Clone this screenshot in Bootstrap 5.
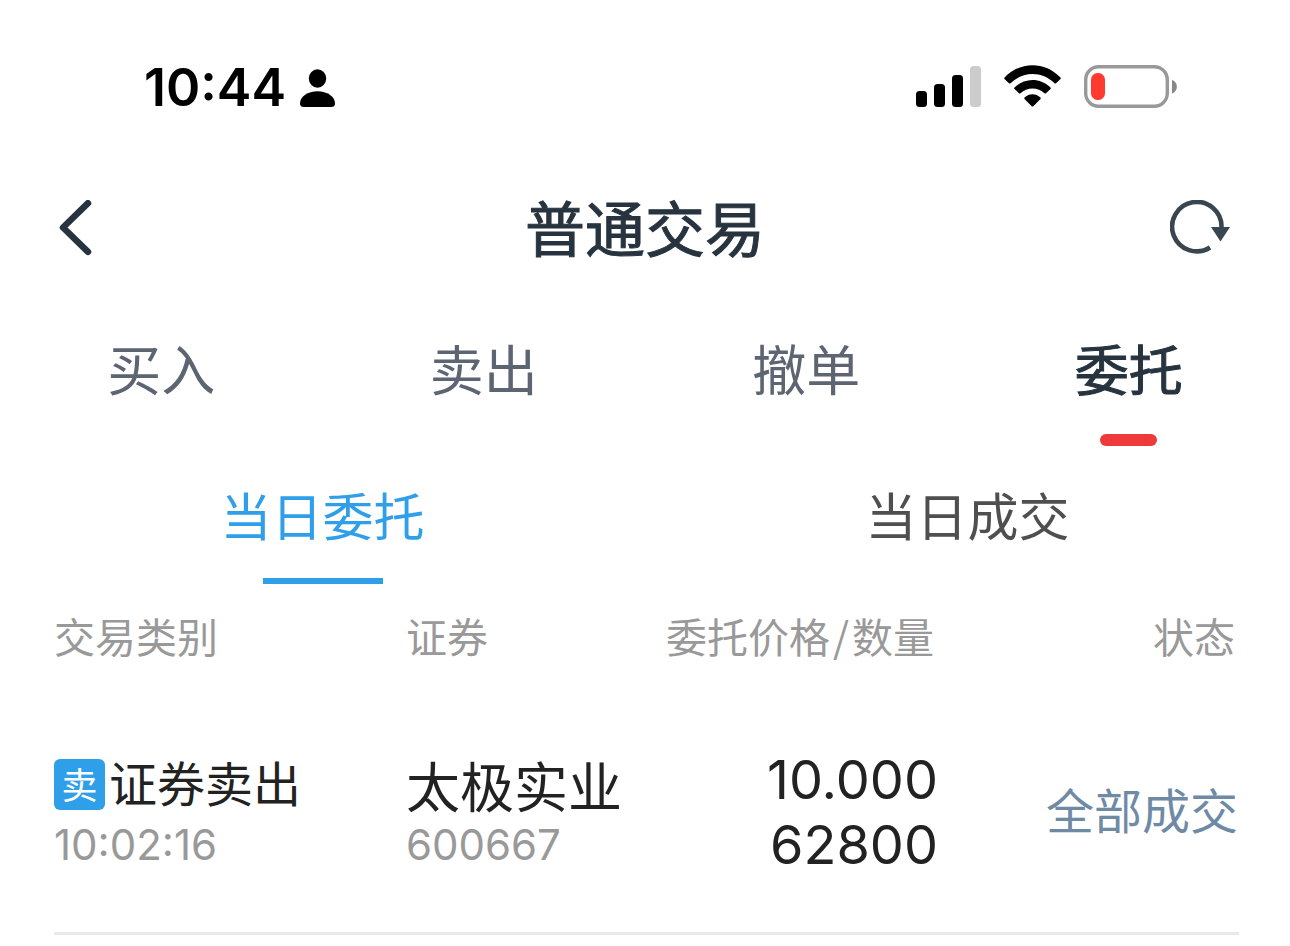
<!DOCTYPE html>
<html lang="zh-CN">
<head>
<meta charset="utf-8">
<meta name="viewport" content="width=device-width, initial-scale=1">
<title>普通交易</title>
<link rel="stylesheet" href="https://cdn.jsdelivr.net/npm/bootstrap@5.3.0/dist/css/bootstrap.min.css">
<style>
:root { --ink: #27343f; --blue: #2f9fea; --red: #ee3a3b; }
body { font-family: Inter, "Noto Sans CJK SC", sans-serif; background: #fff; color: #222; }
.zh { font-family: "Noto Sans CJK SC", sans-serif; }
svg { display: block; }
.medium { font-weight: 400; -webkit-text-stroke: 1px currentColor; }

.status-bar { height: 176px; padding: 0 112px 0 144px; color: #000; }
.clock-group { gap: 14px; }
.clock { font-size: 52px; font-weight: 600; line-height: 60px; }
.signals { gap: 23px; padding-bottom: 4px; }

.title-bar { height: 104px; padding: 0 56px; color: var(--ink); }
.title-bar h1 { padding-bottom: 4px; font-size: 60px; line-height: 80px; }

.main-tabs a { padding-top: 48px; color: #5d6472; font-size: 54px; line-height: 80px; }
.main-tabs a.active { color: var(--ink); }
.main-tabs a::after { content: ""; width: 57px; height: 12px; margin-top: 26px; border-radius: 6px; }
.main-tabs a.active::after { background: var(--red); }

.sub-tabs a { padding-top: 28px; color: #4f4f4f; font-size: 51px; line-height: 80px; }
.sub-tabs a.active { color: var(--blue); }
.sub-tabs a::after { content: ""; width: 120px; height: 6px; margin-top: 24px; }
.sub-tabs a.active::after { background: var(--blue); }

.orders { padding: 0 51px 0 54px; }
.orders table { table-layout: fixed; }
.orders th { height: 106px; padding: 0 4px 2px 0; color: #999; font-size: 41px; font-weight: 400; }
.orders td { height: 243px; padding: 8px 0 0; border-bottom: 3px solid #e9e9e9; }
.orders th, .orders td { vertical-align: middle; white-space: nowrap; }
.slash { padding: 0 3px; }
.kind { font-size: 48px; line-height: 52px; }
.kind-name { padding-bottom: 8px; }
.side { width: 51px; height: 51px; border-radius: 6px; background: var(--blue); color: #fff; font-size: 36px; line-height: 48px; }
.stock { font-size: 54px; line-height: 60px; }
.detail { color: #999; font-size: 42px; line-height: 60px; }
.orders .amount { padding-top: 2px; font-size: 54px; line-height: 65px; }
.orders .state { padding: 0 1px 6px 0; color: #6f8aa5; font-size: 48px; }
</style>
</head>
<body>
<header>
  <div class="status-bar d-flex align-items-center justify-content-between">
    <div class="clock-group d-flex align-items-center">
      <span class="clock">10:44</span>
      <svg width="35" height="38" viewBox="0 0 35 38" fill="#000" aria-hidden="true">
        <ellipse cx="17.500" cy="9.500" rx="8.700" ry="9.300"/>
        <path d="M4 38Q0 38 0 34.500C0 27.500 8 22.300 17.500 22.300S35 27.500 35 34.500Q35 38 31 38Z"/>
      </svg>
    </div>
    <div class="signals d-flex align-items-center">
      <svg width="65" height="42" viewBox="0 0 65 42" aria-hidden="true">
        <rect y="26" width="11" height="16" rx="3.500"/>
        <rect x="18" y="19" width="11" height="23" rx="3.500"/>
        <rect x="36" y="10" width="11" height="32" rx="3.500"/>
        <rect x="54" y="1" width="11" height="41" rx="3.500" fill="#ccc"/>
      </svg>
      <svg width="57" height="42" viewBox="0 0 57 42" aria-hidden="true">
        <path d="M.5 12.500C16-4 41-4 56.500 12.500Q57 13.300 56.500 14L52 18.300Q51.200 18.900 50.500 18.300C38 6 19 6 6.500 18.300Q5.800 18.900 5 18.300L.5 14Q0 13.300 .5 12.500Z"/>
        <path d="M10.500 22.500C20.500 12.500 36.500 12.500 46.500 22.500Q47.100 23.200 46.500 24L42 28.300Q41.300 28.900 40.500 28.300C34 22 23 22 16.500 28.300Q15.700 28.900 15 28.300L10.500 24Q9.900 23.200 10.500 22.500Z"/>
        <path d="M20.500 32.500C25 28 32 28 36.500 32.500Q37 33.200 36.500 34L29.300 41.200Q28.500 42 27.700 41.200L20.500 34Q20 33.200 20.500 32.500Z"/>
      </svg>
      <svg width="94" height="43" viewBox="0 0 94 43" aria-hidden="true">
        <rect x="1.700" y="1.700" width="81.600" height="39.600" rx="13" fill="none" stroke="#999" stroke-width="3.400"/>
        <rect x="7" y="8" width="14" height="27" rx="6.500" fill="#ff3b30"/>
        <path d="M88 15C94.500 17 94.500 26.500 88 28.500Z" fill="#888"/>
      </svg>
    </div>
  </div>
  <div class="title-bar d-flex align-items-center justify-content-between">
    <button type="button" class="btn p-0 border-0" aria-label="返回">
      <svg width="64" height="56" viewBox="0 0 64 56" fill="none" stroke="#27343f" stroke-width="6.500" stroke-linecap="round" stroke-linejoin="round"><path d="M32 3.200L7 27.500L32 51.800"/></svg>
    </button>
    <h1 class="zh medium m-0">普通交易</h1>
    <button type="button" class="btn p-0 border-0" aria-label="刷新">
      <svg width="64" height="56" viewBox="0 0 64 56"><path d="M40 47.500A24.700 24.700 0 1 1 51.500 27" fill="none" stroke="#394650" stroke-width="4.600"/><path d="M41 27H60L50.500 41.500Z" fill="#394650"/></svg>
    </button>
  </div>
</header>
<nav class="main-tabs zh row g-0" aria-label="交易">
  <a href="#" class="col d-flex flex-column align-items-center text-decoration-none">买入</a>
  <a href="#" class="col d-flex flex-column align-items-center text-decoration-none">卖出</a>
  <a href="#" class="col d-flex flex-column align-items-center text-decoration-none">撤单</a>
  <a href="#" class="col d-flex flex-column align-items-center text-decoration-none active" aria-current="page"><span class="medium">委托</span></a>
</nav>
<nav class="sub-tabs zh row g-0" aria-label="委托">
  <a href="#" class="col d-flex flex-column align-items-center text-decoration-none active" aria-current="page">当日委托</a>
  <a href="#" class="col d-flex flex-column align-items-center text-decoration-none">当日成交</a>
</nav>
<main class="orders">
  <table class="w-100">
    <colgroup><col style="width:29.700%"><col style="width:20%"><col style="width:24.900%"><col style="width:25.400%"></colgroup>
    <thead>
      <tr class="zh"><th scope="col">交易类别</th><th scope="col">证券</th><th scope="col" class="text-end">委托价格<span class="slash">/</span>数量</th><th scope="col" class="text-end">状态</th></tr>
    </thead>
    <tbody>
      <tr>
        <td>
          <div class="kind zh d-flex align-items-center gap-1"><span class="side text-center">卖</span><span class="kind-name">证券卖出</span></div>
          <div class="detail">10:02:16</div>
        </td>
        <td>
          <div class="stock zh">太极实业</div>
          <div class="detail">600667</div>
        </td>
        <td class="amount text-end"><div>10.000</div><div>62800</div></td>
        <td class="state zh text-end">全部成交</td>
      </tr>
    </tbody>
  </table>
</main>
<script src="https://cdn.jsdelivr.net/npm/bootstrap@5.3.0/dist/js/bootstrap.bundle.min.js"></script>
</body>
</html>
